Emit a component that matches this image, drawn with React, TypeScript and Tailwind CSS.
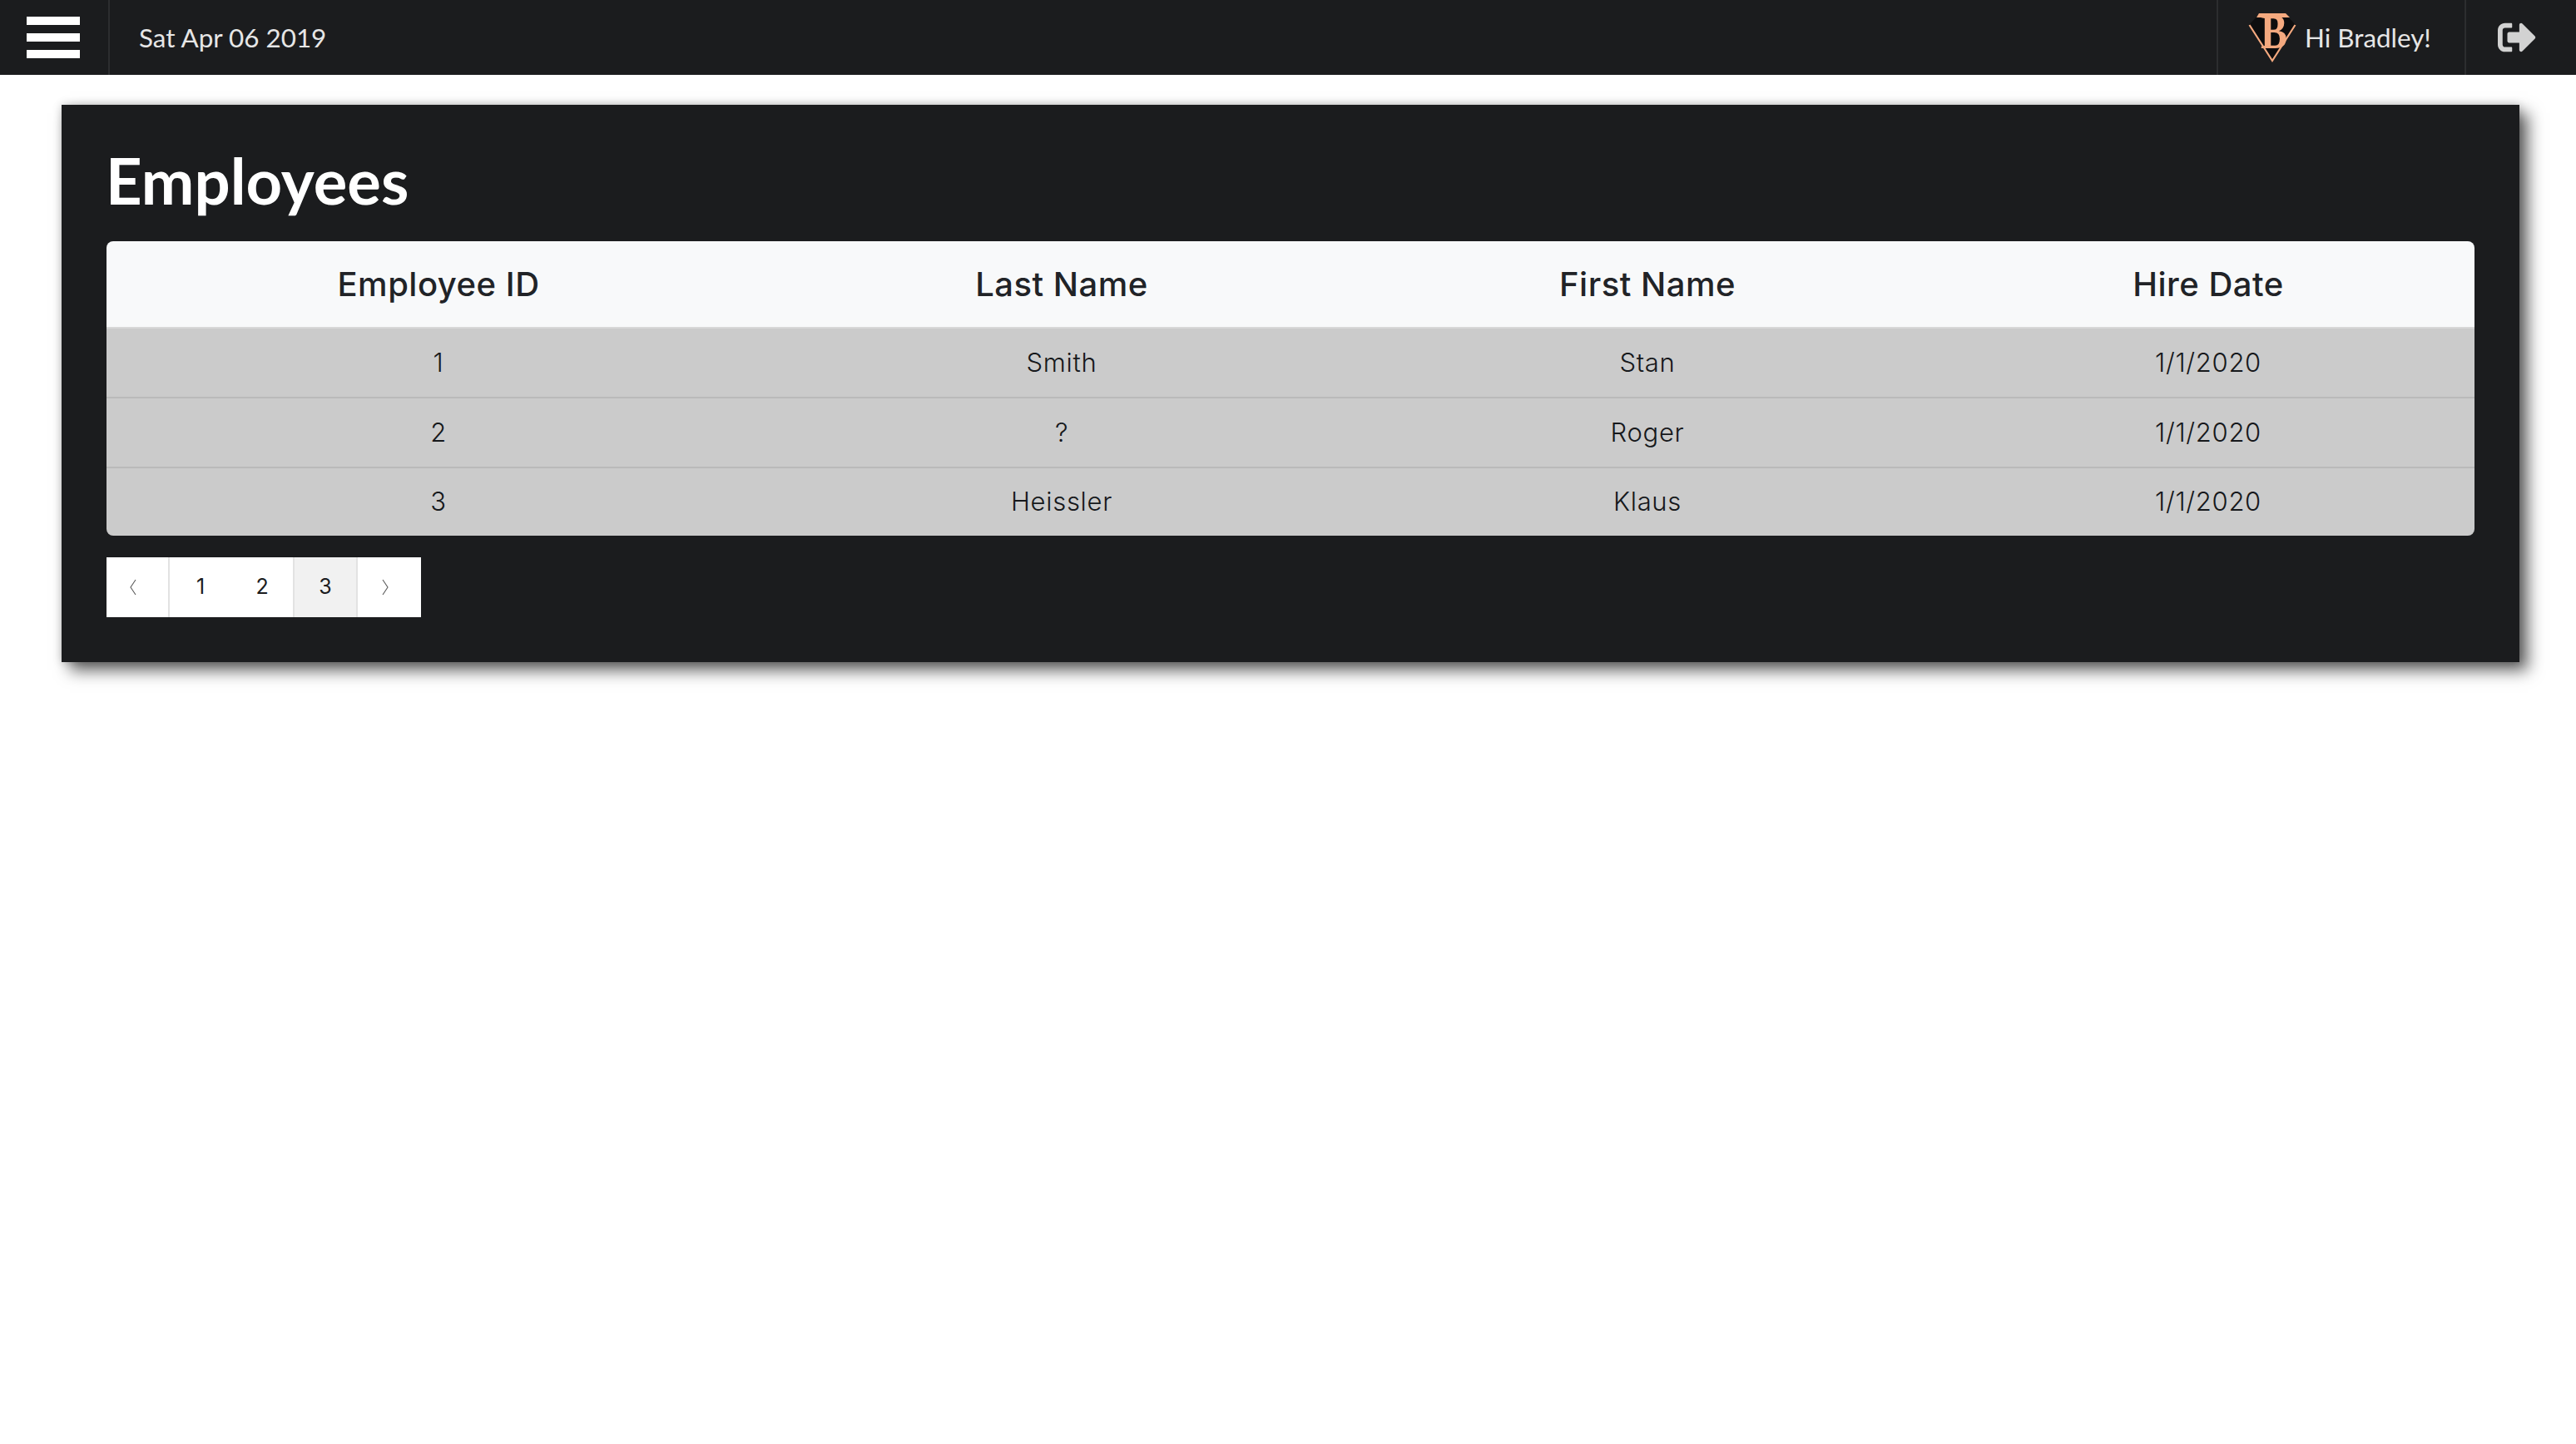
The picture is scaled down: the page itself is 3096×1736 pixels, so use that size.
import { FaSignOutAlt } from "react-icons/fa";

const employees = [
  { id: 1, last: "Smith", first: "Stan", hired: "1/1/2020" },
  { id: 2, last: "?", first: "Roger", hired: "1/1/2020" },
  { id: 3, last: "Heissler", first: "Klaus", hired: "1/1/2020" },
];

function Logo() {
  return (
    <svg width="60" height="64" viewBox="0 0 60 64" className="shrink-0 overflow-visible">
      <path d="M14 3 H44 L57 17 L29 61 L1 17 Z" fill="#0d0d0e" />
      <path d="M1.5 17 L29 60 L56.5 17" fill="none" stroke="#f4a97f" strokeWidth="2.2" />
      <path d="M13 3 H45 L50 8 H10 Z" fill="#f4a97f" />
      <text
        transform="translate(31 45) scale(0.8 1)"
        textAnchor="middle"
        fontSize="60"
        fontWeight="700"
        fontFamily="'Liberation Serif', serif"
        fill="#f4a97f"
      >
        B
      </text>
    </svg>
  );
}

function Chevron({ dir }: { dir: "left" | "right" }) {
  return (
    <svg width="8" height="20" viewBox="0 0 8 20" fill="none" stroke="#5a5a5a" strokeWidth="1.1">
      <path d={dir === "left" ? "M7 1 L1 10 L7 19" : "M1 1 L7 10 L1 19"} />
    </svg>
  );
}

export default function App() {
  return (
    <div className="min-h-screen bg-white font-['Lato',sans-serif]">
      <header className="flex h-[90px] items-stretch bg-[#1b1c1e] text-[31.4px] text-[#e6e6e6]">
        <div className="flex w-[132px] flex-col justify-center gap-[10px] border-r-2 border-[#2c2d2f] pl-8">
          <span className="h-[10px] w-16 bg-white" />
          <span className="h-[10px] w-16 bg-white" />
          <span className="h-[10px] w-16 bg-white" />
        </div>
        <div className="flex flex-1 items-center pl-[35px] pt-[2px]">Sat Apr 06 2019</div>
        <div className="flex w-[300px] items-center gap-2 border-x-2 border-[#2c2d2f] pl-9">
          <Logo />
          <span className="pt-[2px]">Hi Bradley!</span>
        </div>
        <div className="flex w-[132px] items-center pl-[38px] text-[#d2d2d2]">
          <FaSignOutAlt size={46} />
        </div>
      </header>

      <main className="pl-[74px] pt-9">
        <section className="w-[2954px] bg-[#1b1c1e] px-[54px] pb-[54px] pt-[46px] shadow-[10px_10px_18px_rgba(0,0,0,0.62),0_0_10px_rgba(0,0,0,0.2)]">
          <h1 className="mb-7 -ml-px text-[76px] leading-[90px] font-bold text-white">Employees</h1>
          <table className="w-[2846px] table-fixed border-collapse font-['Inter',sans-serif]">
            <colgroup>
              <col className="w-[798px]" />
              <col className="w-[700px]" />
              <col className="w-[708px]" />
              <col className="w-[640px]" />
            </colgroup>
            <thead>
              <tr className="h-[104px] border-b-2 border-[#d8d8d8] bg-[#f8f9fa] text-[40px] tracking-[0.5px] text-[#212327]">
                <th className="rounded-tl-lg font-medium">Employee ID</th>
                <th className="font-medium">Last Name</th>
                <th className="font-medium">First Name</th>
                <th className="rounded-tr-lg font-medium">Hire Date</th>
              </tr>
            </thead>
            <tbody>
              {employees.map((e) => (
                <tr key={e.id} className="h-[84px] border-b-2 border-[#bababa] bg-[#cbcbcb] text-[31px] font-light tracking-[0.7px] text-[#16181b] last:h-[82px] last:border-b-0">
                  <td className="text-center in-[tr:last-child]:rounded-bl-lg">{e.id}</td>
                  <td className="text-center">{e.last}</td>
                  <td className="text-center">{e.first}</td>
                  <td className="text-center in-[tr:last-child]:rounded-br-lg">{e.hired}</td>
                </tr>
              ))}
            </tbody>
          </table>

          <nav className="mt-[26px] flex h-[72px] w-[378px] items-stretch bg-white font-['Inter',sans-serif] text-[25px] text-[#1b1c1e]">
            <span className="flex w-[76px] items-center justify-center border-r-2 border-[#e2e2e2] pr-[10px]">
              <Chevron dir="left" />
            </span>
            <span className="flex w-[74px] items-center justify-center">1</span>
            <span className="flex w-[74px] items-center justify-center">2</span>
            <span className="flex w-[78px] items-center justify-center border-x-2 border-[#e2e2e2] bg-[#f1f1f1]">3</span>
            <span className="flex flex-1 items-center justify-center pr-[10px]">
              <Chevron dir="right" />
            </span>
          </nav>
        </section>
      </main>
    </div>
  );
}
